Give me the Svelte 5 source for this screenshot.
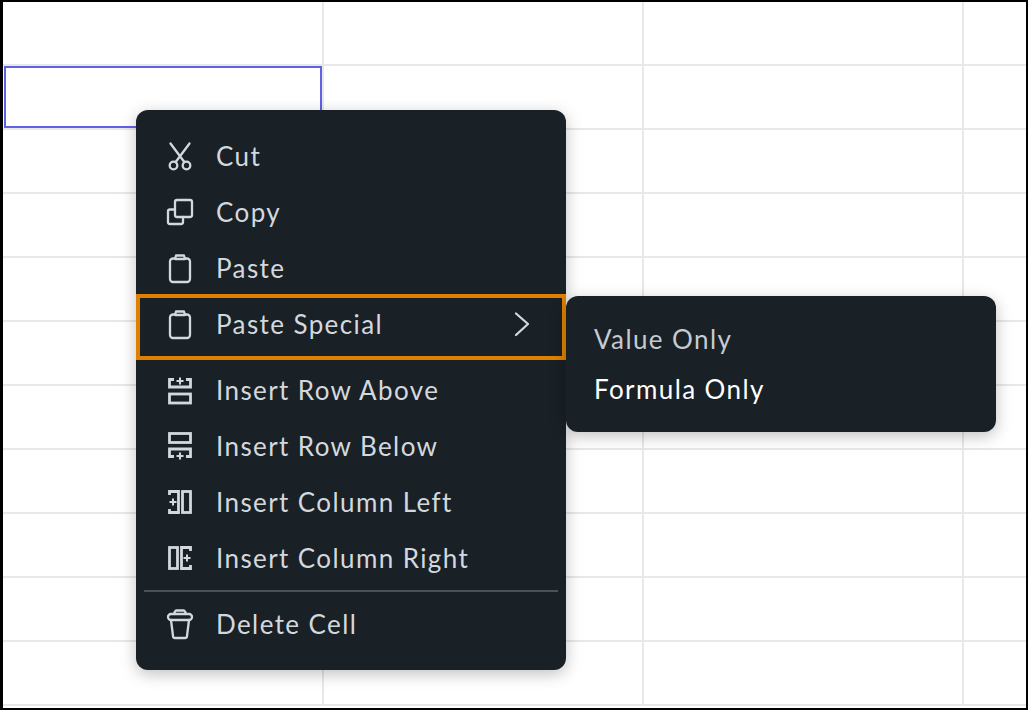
<script>
  const rows = Array.from({ length: 11 });
  const cols = Array.from({ length: 4 });
</script>

<div class="page">
  <div class="sheet">
    {#each rows as _, r}
      {#each cols as _, c}
        <div class="cell" class:selected={r === 1 && c === 0}></div>
      {/each}
    {/each}
  </div>

  <div class="menu">
    <div class="item">
      <svg class="icon" viewBox="0 0 32 32"><circle cx="9.500" cy="25.500" r="3.800"/><circle cx="22.500" cy="25.500" r="3.800"/><path d="M6.500 3.500 20.300 22M25.500 3.500 11.700 22"/></svg>
      <span>Cut</span>
    </div>
    <div class="item">
      <svg class="icon" viewBox="0 0 32 32"><rect x="11" y="4" width="17" height="17" rx="2"/><path d="M11 13.500H6a2 2 0 0 0-2 2V26a2 2 0 0 0 2 2h11a2 2 0 0 0 2-2v-5"/></svg>
      <span>Copy</span>
    </div>
    <div class="item">
      <svg class="icon" viewBox="0 0 32 32"><path d="M11 6.500H9a3 3 0 0 0-3 3V27a3 3 0 0 0 3 3h14a3 3 0 0 0 3-3V9.500a3 3 0 0 0-3-3h-2"/><path d="M11 7 12 3.500H20L21 7Z"/></svg>
      <span>Paste</span>
    </div>
    <div class="item special">
      <svg class="icon" viewBox="0 0 32 32"><path d="M11 6.500H9a3 3 0 0 0-3 3V27a3 3 0 0 0 3 3h14a3 3 0 0 0 3-3V9.500a3 3 0 0 0-3-3h-2"/><path d="M11 7 12 3.500H20L21 7Z"/></svg>
      <span>Paste Special</span>
      <svg class="icon chevron" viewBox="0 0 32 32"><path d="M10 5.500 22 16 10 27"/></svg>
    </div>
    <div class="item after-special">
      <svg class="icon square" viewBox="0 0 32 32"><path d="M10 5.500H5.500V13H26.500V5.500H22"/><path class="plus" d="M12.500 7H19.500M16 3.500V10.500"/><rect x="5.500" y="20" width="21" height="9"/></svg>
      <span>Insert Row Above</span>
    </div>
    <div class="item">
      <svg class="icon square" viewBox="0 0 32 32"><rect x="5.500" y="3.500" width="21" height="9"/><path d="M10 26.500H5.500V19H26.500V26.500H22"/><path class="plus" d="M12.500 26H19.500M16 22.500V29.500"/></svg>
      <span>Insert Row Below</span>
    </div>
    <div class="item">
      <svg class="icon square" viewBox="0 0 32 32"><path d="M5.500 9V5.500H14.500V26.500H5.500V23"/><path class="plus" d="M5.500 16H12.500M9 12.500V19.500"/><rect x="18.500" y="5.500" width="8" height="21"/></svg>
      <span>Insert Column Left</span>
    </div>
    <div class="item">
      <svg class="icon square" viewBox="0 0 32 32"><rect x="5.500" y="5.500" width="8" height="21"/><path d="M26.500 9V5.500H17.500V26.500H26.500V23"/><path class="plus" d="M19.500 16H26.500M23 12.500V19.500"/></svg>
      <span>Insert Column Right</span>
    </div>
    <div class="divider"></div>
    <div class="item">
      <svg class="icon" viewBox="0 0 32 32"><path d="M10 6 11 3.500A2 2 0 0 1 12.500 2.500H19.500A2 2 0 0 1 21 3.500L22 6"/><rect x="4" y="6" width="24" height="6" rx="3"/><path d="M7 12 9 28a2 2 0 0 0 2 2H21a2 2 0 0 0 2-2L25 12"/></svg>
      <span>Delete Cell</span>
    </div>
  </div>

  <div class="submenu">
    <div class="sub-item">Value Only</div>
    <div class="sub-item active">Formula Only</div>
  </div>
</div>

<style>
  :global(body) {
    margin: 0;
    background: #fff;
  }

  .page {
    position: relative;
    box-sizing: border-box;
    width: 1028px;
    height: 710px;
    overflow: hidden;
    border: solid #000;
    border-width: 2px 2px 2px 3px;
    font-family: Lato, "Liberation Sans", sans-serif;
  }

  .sheet {
    display: grid;
    grid-template-columns: 321px 320px 320px 1fr;
    grid-auto-rows: 64px;
  }

  .cell {
    position: relative;
    box-sizing: border-box;
    border-right: 2px solid #e8e8e8;
    border-bottom: 2px solid #e8e8e8;
  }

  .cell:nth-child(4n) {
    border-right: 0;
  }

  .cell.selected::after {
    content: "";
    position: absolute;
    left: 1px;
    right: 0;
    top: 0;
    bottom: 0;
    border: 2px solid #6161e6;
  }

  .menu,
  .submenu {
    position: absolute;
    box-sizing: border-box;
    width: 430px;
    background: #192026;
    border-radius: 12px;
    box-shadow: 0 4px 16px rgba(0, 0, 0, 0.25);
  }

  .menu {
    left: 133px;
    top: 108px;
    padding: 18px 0;
    height: 560px;
  }

  .submenu {
    left: 563px;
    top: 294px;
    height: 136px;
    padding: 18px 28px;
  }

  .item {
    display: flex;
    align-items: center;
    box-sizing: border-box;
    height: 56px;
    padding: 0 28px;
    gap: 20px;
    color: #d3d8de;
    font-size: 26px;
    letter-spacing: 1.4px;
  }

  .special {
    height: 66px;
    margin-top: -2px;
    padding: 0 24px 6px;
    border: 4px solid #e08000;
  }

  .after-special {
    margin-top: 2px;
  }

  .icon {
    flex: none;
    width: 32px;
    height: 32px;
    fill: none;
    stroke: #d3d8de;
    stroke-width: 2.300;
    stroke-linejoin: round;
    stroke-linecap: round;
  }

  .square {
    stroke-linejoin: miter;
    stroke-linecap: butt;
    stroke-width: 2.800;
  }

  .square .plus {
    stroke-width: 2;
  }

  .chevron {
    margin-left: auto;
  }

  .divider {
    height: 2px;
    margin: 4px 8px 4px;
    background: #4a5157;
  }

  .sub-item {
    display: flex;
    align-items: center;
    height: 50px;
    color: #c5cbd3;
    font-size: 26px;
    letter-spacing: 1.4px;
  }

  .sub-item.active {
    color: #fff;
  }
</style>
